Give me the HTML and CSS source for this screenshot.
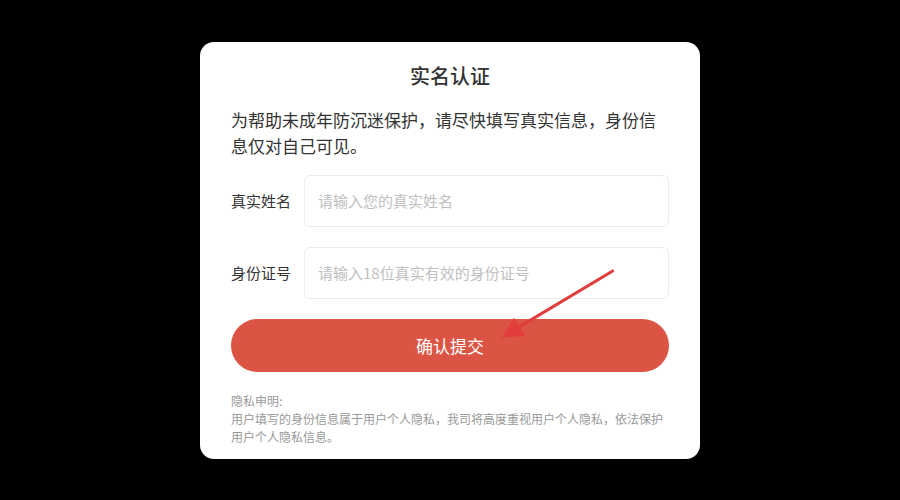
FILE: index.html
```html
<!DOCTYPE html>
<html lang="zh-CN">
<head>
<meta charset="utf-8">
<title>实名认证</title>
<link rel="stylesheet" href="styles.css">
</head>
<body>
<div class="stage">
  <div class="card">
    <h1 class="title">实名认证</h1>
    <p class="intro">为帮助未成年防沉迷保护，请尽快填写真实信息，身份信息仅对自己可见。</p>
    <div class="form">
      <div class="row">
        <span class="label">真实姓名</span>
        <div class="input">请输入您的真实姓名</div>
      </div>
      <div class="row">
        <span class="label">身份证号</span>
        <div class="input">请输入18位真实有效的身份证号</div>
      </div>
    </div>
    <div class="btn">确认提交</div>
    <div class="privacy">
      <div>隐私申明:</div>
      <div>用户填写的身份信息属于用户个人隐私，我司将高度重视用户个人隐私，依法保护用户个人隐私信息。</div>
    </div>
    <svg class="arrow" width="140" height="100" viewBox="0 0 140 100">
      <line x1="122.7" y1="15" x2="28" y2="71.6" stroke="#e23d3d" stroke-width="3" stroke-linecap="round"/>
      <polygon points="11.7,81.7 24.1,61.8 34.9,79.8" fill="#e23d3d"/>
    </svg>
  </div>
</div>
</body>
</html>
```

FILE: styles.css
```css
html, body {
  margin: 0;
  padding: 0;
  background: #000;
}
body {
  font-family: "Noto Sans CJK SC", "Noto Sans", sans-serif;
  color: #333;
}
.stage {
  width: 900px;
  height: 500px;
  display: flex;
  align-items: center;
  justify-content: center;
}
.card {
  position: relative;
  width: 500px;
  box-sizing: border-box;
  background: #fff;
  border-radius: 14px;
  padding: 20px 31px 13px 31px;
  display: flex;
  flex-direction: column;
}
.title {
  margin: 0;
  text-align: center;
  font-size: 20px;
  line-height: 28px;
  font-weight: 500;
  color: #333;
}
.intro {
  margin: 17px 0 0 0;
  font-size: 17px;
  line-height: 26px;
  color: #333;
}
.form {
  margin-top: 16px;
  display: flex;
  flex-direction: column;
  gap: 20px;
}
.row {
  display: flex;
  align-items: center;
  gap: 13px;
}
.label {
  width: 60px;
  flex: none;
  font-size: 15px;
  color: #333;
  white-space: nowrap;
}
.input {
  flex: 1;
  height: 52px;
  box-sizing: border-box;
  border: 1px solid #ececec;
  border-radius: 6px;
  padding: 0 13px;
  display: flex;
  align-items: center;
  font-size: 15px;
  color: #c0c0c0;
}
.btn {
  margin-top: 20px;
  height: 53px;
  border-radius: 27px;
  background: #dc5544;
  color: #fff;
  font-size: 17px;
  display: flex;
  align-items: center;
  justify-content: center;
}
.privacy {
  margin-top: 20px;
  font-size: 12px;
  line-height: 18px;
  color: #999;
}
.arrow {
  position: absolute;
  left: 290px;
  top: 214px;
}
```
